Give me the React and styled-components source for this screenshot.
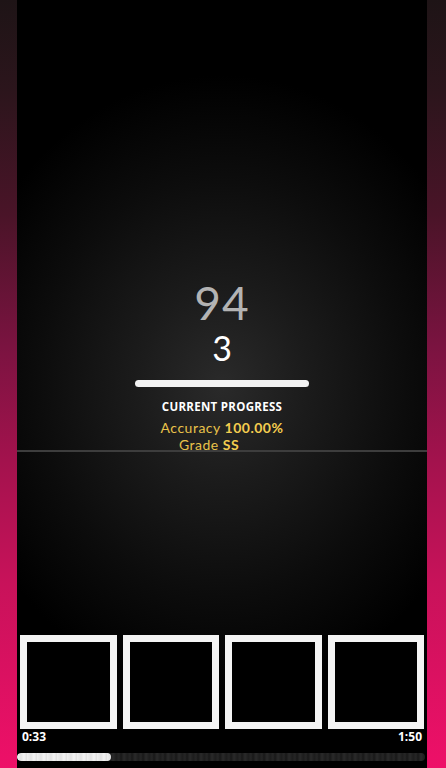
import React from "react";
import styled, { createGlobalStyle } from "styled-components";

const GlobalStyle = createGlobalStyle`
  html, body {
    margin: 0;
    padding: 0;
    background: #000;
  }
  #root {
    height: 768px;
  }
`;

const Screen = styled.div`
  display: flex;
  height: 768px;
  width: 446px;
  overflow: hidden;
  font-family: "Lato", "Liberation Sans", sans-serif;
`;

const SideStrip = styled.div`
  width: ${(p) => p.$width}px;
  flex-shrink: 0;
  background: linear-gradient(
    to bottom,
    #1e1416 0%,
    #2c151c 12%,
    #4a1428 28%,
    #7a1340 45%,
    #a3124d 60%,
    #c8125a 76%,
    #ee1068 100%
  );
`;

const Stage = styled.div`
  position: relative;
  flex: 1;
  display: flex;
  flex-direction: column;
  background: radial-gradient(
    ellipse 270px 310px at 50% 385px,
    #2a2a2a 0%,
    #1b1b1b 32%,
    #0c0c0c 68%,
    #000 100%
  );
`;

const HitLine = styled.div`
  position: absolute;
  left: 0;
  right: 0;
  top: 450px;
  height: 2px;
  background: #3d3d3d;
`;

const Stats = styled.div`
  flex: 1;
  display: flex;
  flex-direction: column;
  align-items: center;
  padding-top: 278px;
`;

const Score = styled.div`
  font-size: 46px;
  line-height: 50px;
  font-weight: 400;
  color: #b3b3b3;
  letter-spacing: 1px;
`;

const Combo = styled.div`
  font-size: 34px;
  line-height: 40px;
  font-weight: 400;
  color: #fff;
`;

const Bar = styled.div`
  margin-top: 12px;
  width: 174px;
  height: 7px;
  border-radius: 4px;
  background: #f2f2f2;
`;

const Label = styled.div`
  margin-top: 12px;
  font-family: "Open Sans", "Liberation Sans", sans-serif;
  font-size: 11.5px;
  font-weight: 700;
  color: #fff;
  letter-spacing: 0.3px;
`;

const InfoLine = styled.div`
  font-size: 14px;
  line-height: 17px;
  letter-spacing: 0.5px;
  color: #e9c24a;
  padding-right: ${(p) => p.$shift || 0}px;
  margin-top: ${(p) => p.$top || 0}px;

  b {
    font-weight: 700;
    color: #f4cd4f;
  }
`;

const Tiles = styled.div`
  display: grid;
  grid-template-columns: repeat(4, 1fr);
  gap: 6px;
  padding: 0 3px;
`;

const Tile = styled.div`
  height: 94px;
  border: 7px solid #f4f4f4;
  box-sizing: border-box;
  background: #000;
`;

const TimeRow = styled.div`
  display: flex;
  justify-content: space-between;
  padding: 0 5px;
  height: 14px;
  align-items: center;
  font-family: "Open Sans", "Liberation Sans", sans-serif;
  font-size: 12px;
  font-weight: 700;
  color: #fff;
`;

const Track = styled.div`
  margin: 10px 2px 7px 0;
  height: 8px;
  border-radius: 4px;
  background: repeating-linear-gradient(
    to right,
    #1c1c1c 0px,
    #262626 3px,
    #181818 5px,
    #2a2a2a 8px,
    #1e1e1e 11px
  );
  overflow: hidden;
`;

const Fill = styled.div`
  height: 100%;
  border-radius: 4px;
  background: repeating-linear-gradient(
    to right,
    #f0f0f0 0px,
    #e2e2e2 4px,
    #f4f4f4 7px,
    #dedede 10px
  );
`;

export default function App() {
  const progress = 33 / 110;

  return (
    <>
      <GlobalStyle />
      <Screen>
        <SideStrip $width={17} />
        <Stage>
          <HitLine />
          <Stats>
            <Score>94</Score>
            <Combo>3</Combo>
            <Bar />
            <Label>CURRENT PROGRESS</Label>
            <InfoLine $top={5}>
              Accuracy <b>100.00%</b>
            </InfoLine>
            <InfoLine $shift={26}>
              Grade <b>SS</b>
            </InfoLine>
          </Stats>
          <Tiles>
            <Tile />
            <Tile />
            <Tile />
            <Tile />
          </Tiles>
          <TimeRow>
            <span>0:33</span>
            <span>1:50</span>
          </TimeRow>
          <Track>
            <Fill style={{ width: `${progress * 100 * 0.77}%` }} />
          </Track>
        </Stage>
        <SideStrip $width={19} />
      </Screen>
    </>
  );
}
